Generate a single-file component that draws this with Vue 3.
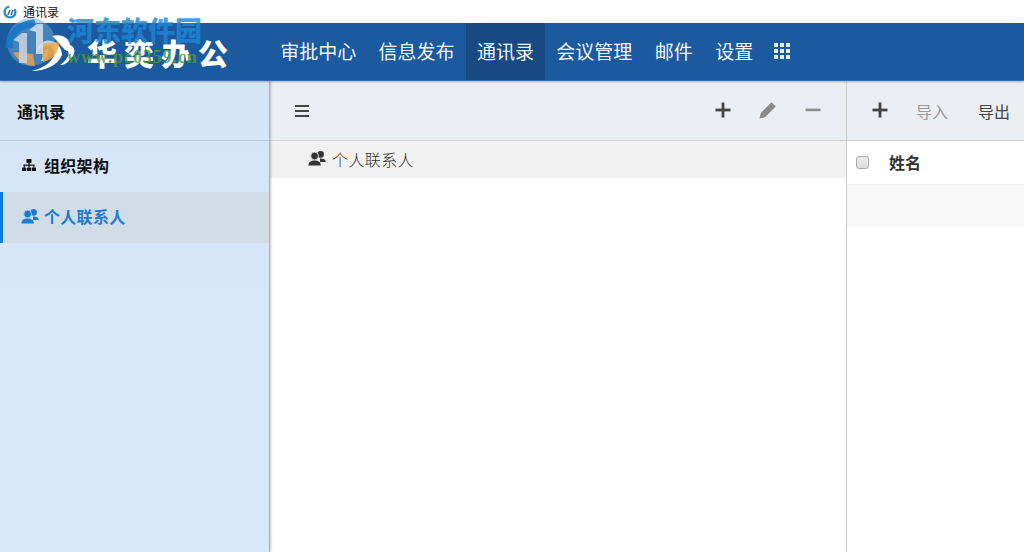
<template>
  <div class="window">
    <div class="titlebar">
      <svg class="title-icon" viewBox="0 0 14 14" width="14" height="14">
        <circle cx="7" cy="7" r="5.4" fill="none" stroke="#2f8fc9" stroke-width="2.4" stroke-dasharray="24 6" />
        <path d="M5 10 L7 5 M8 10 L10 5" stroke="#2a6ea8" stroke-width="1.5" />
      </svg>
      <span>通讯录</span>
    </div>

    <header class="topbar">
      <div class="brand">
        <svg class="brand-mark" viewBox="28 33 50 42" width="50" height="42" fill="#fff">
          <path d="M31 72 C46 72 58 66 62 56 C62 48 56 42 50 42 C44 40 38 46 36 54 C40 48 46 46 50 47 C54 50 56 56 52 60 C48 66 40 70 31 72 Z" />
          <path d="M52 37 C62 34 70 40 70 46 C76 48 76 56 70 60 C68 64 64 66 60 66 C66 62 70 56 68 52 C64 52 60 44 52 37 Z" />
          <path d="M46 50 L41 62 L44 62 L50 50 Z" />
        </svg>
        <span class="brand-name">华奕办公</span>
      </div>
      <nav class="nav">
        <a v-for="item in navItems" :key="item" class="nav-item" :class="{ active: item === '通讯录' }">{{ item }}</a>
        <a class="nav-item grid-btn">
          <span class="dots"><i v-for="n in 9" :key="n"></i></span>
        </a>
      </nav>
    </header>

    <div class="body">
      <aside class="sidebar">
        <div class="side-title">通讯录</div>
        <div class="side-item">
          <svg viewBox="0 0 16 14" width="16" height="14" fill="#111">
            <rect x="5.5" y="1" width="5" height="4" rx=".6" />
            <rect x="7.4" y="5" width="1.2" height="2.4" />
            <rect x="2.6" y="6.6" width="10.8" height="1.2" />
            <rect x="2.6" y="6.6" width="1.2" height="3" />
            <rect x="12.2" y="6.6" width="1.2" height="3" />
            <rect x="7.4" y="7" width="1.2" height="2.6" />
            <rect x="1" y="9.4" width="4.2" height="3.6" rx=".6" />
            <rect x="5.9" y="9.4" width="4.2" height="3.6" rx=".6" />
            <rect x="10.8" y="9.4" width="4.2" height="3.6" rx=".6" />
          </svg>
          <span>组织架构</span>
        </div>
        <div class="side-item selected">
          <svg viewBox="0 0 18 15" width="18" height="15" fill="#1a7bd0">
            <circle cx="12.6" cy="3.4" r="3.3" />
            <path d="M12 7.6 C15 7.4 17.8 8.4 17.8 11 L12 11 Z" />
            <circle cx="6.6" cy="5" r="3.9" stroke="#d0dde9" stroke-width=".8" />
            <path d="M.4 14.6 C.4 11 3 9.6 6.6 9.6 C10.2 9.6 12.8 11 12.8 14.6 Z" />
          </svg>
          <span>个人联系人</span>
        </div>
      </aside>

      <section class="tree-pane">
        <div class="toolbar">
          <span class="menu-icon"><i></i><i></i><i></i></span>
          <div class="tools">
            <svg class="tool" viewBox="0 0 16 16" width="16" height="16" fill="#444">
              <rect x="0.5" y="6.6" width="15" height="2.8" />
              <rect x="6.6" y="0.5" width="2.8" height="15" />
            </svg>
            <svg class="tool" viewBox="0 0 18 18" width="18" height="18" fill="#8a8a8a">
              <path d="M0.5 17.5 L1.8 12 L12.6 1.2 L16.8 5.4 L6 16.2 Z" />
            </svg>
            <svg class="tool" viewBox="0 0 16 16" width="16" height="16" fill="#8a8a8a">
              <rect x="0.5" y="6.6" width="15" height="2.6" />
            </svg>
          </div>
        </div>
        <div class="tree-row">
          <svg viewBox="0 0 18 15" width="18" height="15" fill="#333">
            <circle cx="12.6" cy="3.4" r="3.3" />
            <path d="M12 7.6 C15 7.4 17.8 8.4 17.8 11 L12 11 Z" />
            <circle cx="6.6" cy="5" r="3.9" stroke="#f1f1f1" stroke-width=".8" />
            <path d="M.4 14.6 C.4 11 3 9.6 6.6 9.6 C10.2 9.6 12.8 11 12.8 14.6 Z" />
          </svg>
          <span>个人联系人</span>
        </div>
      </section>

      <section class="list-pane">
        <div class="toolbar list-toolbar">
          <svg viewBox="0 0 16 16" width="16" height="16" fill="#444">
            <rect x="0.5" y="6.6" width="15" height="2.8" />
            <rect x="6.6" y="0.5" width="2.8" height="15" />
          </svg>
          <span class="list-btn muted">导入</span>
          <span class="list-btn">导出</span>
        </div>
        <div class="list-head">
          <span class="check"></span>
          <span class="col-name">姓名</span>
        </div>
        <div class="list-row"></div>
      </section>
    </div>

    <!-- 截图上的水印 -->
    <div class="watermark">
      <svg class="wm-logo" viewBox="0 0 56 56" width="56" height="56" fill="none">
        <circle cx="26" cy="26" r="24" fill="#6aa9d8" opacity=".5" />
        <path d="M4 32 C4 18 14 8 30 7" stroke="#1577c6" stroke-width="7" opacity=".85" />
        <path d="M8 37 C14 46 22 50 30 50 L28 38 L10 36 Z" fill="#e6a24c" opacity=".85" />
        <path d="M36 28 L54 26 C54 36 48 44 38 46 Z" fill="#eea642" opacity=".85" />
        <path d="M8 24 L17 17 L22 17 L22 47 L14 47 L14 26 Z" fill="#cbd5df" opacity=".85" />
        <path d="M24 14 L32 8 L38 8 L38 38 L31 38 L31 16 Z" fill="#d8e2ec" opacity=".85" />
      </svg>
      <span class="wm-name">河东软件园</span>
      <span class="wm-url">www.pc0359.cn</span>
    </div>
  </div>
</template>

<script setup>
const navItems = ['审批中心', '信息发布', '通讯录', '会议管理', '邮件', '设置']
</script>

<style>
html, body {
  margin: 0;
  background: #fff;
}
</style>

<style scoped>
.window {
  position: relative;
  width: 1024px;
  height: 552px;
  overflow: hidden;
  display: flex;
  flex-direction: column;
  font-family: "Noto Sans CJK SC", "Liberation Sans", sans-serif;
  color: #333;
}
.titlebar {
  height: 23px;
  flex: none;
  display: flex;
  align-items: center;
  gap: 6px;
  padding-left: 3px;
  font-size: 12px;
  color: #111;
  background: #fff;
}
.title-icon {
  flex: none;
}
.topbar {
  height: 58px;
  flex: none;
  display: flex;
  background: #1c5a9f;
  border-bottom: 1px solid #3b6ea8;
  box-sizing: border-box;
  position: relative;
  z-index: 2;
  box-shadow: 0 1px 2px rgba(40, 70, 110, .35);
}
.brand {
  width: 269px;
  flex: none;
  display: flex;
  align-items: center;
  padding-left: 28px;
  box-sizing: border-box;
  gap: 9px;
}
.brand-mark {
  flex: none;
  margin-top: 2px;
}
.brand-name {
  font-size: 30px;
  font-weight: 900;
  line-height: 1;
  color: #fff;
  letter-spacing: 7px;
  white-space: nowrap;
  width: 160px;
}
.nav {
  display: flex;
}
.nav-item {
  display: flex;
  align-items: center;
  padding: 0 11.2px 2px;
  font-size: 19px;
  color: #f2f5f9;
  white-space: nowrap;
}
.nav-item.active {
  background: #174a82;
}
.grid-btn {
  padding-left: 10px;
}
.dots {
  display: grid;
  grid-template-columns: repeat(3, 4px);
  grid-auto-rows: 4px;
  gap: 2px;
}
.dots i {
  background: #e8eef5;
}
.body {
  flex: 1;
  display: flex;
  min-height: 0;
}
.sidebar {
  width: 270px;
  flex: none;
  box-sizing: border-box;
  background: linear-gradient(180deg, #d5e4f6 0%, #d8e7f9 100%);
  border-right: 1px solid #a9b0b8;
  box-shadow: 1px 0 2px rgba(90, 100, 115, .35);
  position: relative;
  z-index: 1;
}
.side-title {
  height: 59px;
  display: flex;
  align-items: center;
  padding-left: 17px;
  font-size: 16px;
  font-weight: 700;
  color: #111;
  border-bottom: 1px solid #bfcbd9;
}
.side-item {
  height: 48px;
  padding-bottom: 3px;
  display: flex;
  align-items: center;
  gap: 7px;
  padding-left: 21px;
  font-size: 16px;
  font-weight: 700;
  letter-spacing: .3px;
  color: #111;
}
.side-item.selected {
  padding-left: 18px;
  gap: 5px;
  border-left: 3px solid #0f7bdc;
  background: #d0dde9;
  color: #1a7bd0;
}
.tree-pane {
  width: 577px;
  flex: none;
  background: #fff;
  border-right: 1px solid #ccc;
  box-sizing: border-box;
}
.toolbar {
  height: 59px;
  display: flex;
  align-items: center;
  justify-content: space-between;
  background: #ebeef3;
  border-bottom: 1px solid #cfd4db;
}
.menu-icon {
  display: flex;
  flex-direction: column;
  gap: 3px;
  margin-left: 25px;
}
.menu-icon i {
  width: 14px;
  height: 2px;
  background: #444;
}
.tools {
  display: flex;
  align-items: center;
  gap: 28px;
  margin-right: 25px;
  margin-top: -2px;
}
.tree-row {
  height: 35px;
  padding-bottom: 2px;
  display: flex;
  align-items: center;
  gap: 6px;
  padding-left: 38px;
  background: #f1f1f1;
  font-size: 16px;
  font-weight: 300;
  letter-spacing: .4px;
  color: #333;
}
.list-pane {
  flex: 1;
  background: #fff;
  min-width: 0;
}
.list-toolbar {
  justify-content: flex-start;
  padding-left: 25px;
  gap: 0;
}
.list-toolbar svg {
  margin-top: -2px;
}
.list-btn {
  font-size: 16px;
  color: #444;
  margin-left: 30px;
  white-space: nowrap;
}
.list-btn.muted {
  color: #999;
  margin-left: 28px;
}
.list-head {
  height: 44px;
  display: flex;
  align-items: center;
  box-sizing: border-box;
  border-bottom: 1px solid #f2f2f2;
}
.check {
  width: 11px;
  height: 11px;
  margin-left: 9px;
  border: 1px solid #a9a9a9;
  border-radius: 3px;
  background: linear-gradient(#ededed, #dcdcdc);
  flex: none;
}
.col-name {
  margin-left: 20px;
  margin-bottom: 2px;
  font-size: 16px;
  font-weight: 700;
  color: #333;
}
.list-row {
  height: 42px;
  background: #f8f8f8;
}
.watermark {
  position: absolute;
  left: 0;
  top: 0;
  width: 210px;
  height: 80px;
  z-index: 5;
  pointer-events: none;
}
.wm-logo {
  position: absolute;
  left: 5px;
  top: 16px;
}
.wm-name {
  position: absolute;
  left: 67px;
  top: 12px;
  font-family: "Noto Sans CJK SC", sans-serif;
  font-size: 27px;
  line-height: 36px;
  font-weight: 900;
  color: #1f87d6;
  opacity: .8;
  white-space: nowrap;
}
.wm-url {
  position: absolute;
  left: 67px;
  top: 47px;
  font-family: "Liberation Serif", serif;
  font-size: 18px;
  font-weight: 700;
  line-height: 20px;
  color: #4c9a3c;
  opacity: .8;
  letter-spacing: .9px;
  white-space: nowrap;
}
</style>
